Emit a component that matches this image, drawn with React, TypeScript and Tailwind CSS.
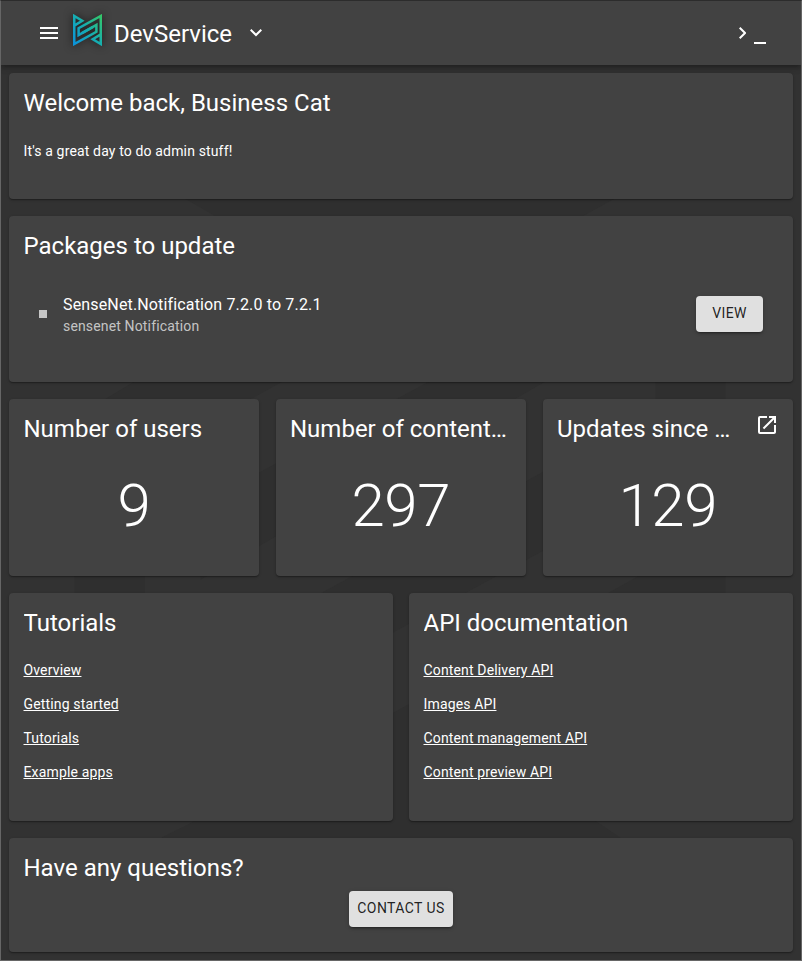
import type { ReactNode } from "react";

function Watermark() {
  return (
    <svg className="absolute inset-0 h-full w-full" viewBox="0 0 802 961" aria-hidden="true">
      <g fill="#2f2f2f">
        <path d="M157 182 314 273 74 417V760L144 700V457L250 399 644 182Z" />
        <path d="M200 504 656 260V318L200 580Z" />
        <path d="M250 632 580 452V531L250 711Z" />
        <path d="M656 290 726 250V640L595 821 620 838 700 900H100L162 838 188 825 401 709 656 567Z" />
      </g>
    </svg>
  );
}

function Logo() {
  return (
    <svg className="ml-[15px] mt-[-6px] h-8 w-[29px] drop-shadow-[0_0_4px_rgba(0,0,0,0.7)]" viewBox="0 0 29 32" fill="none">
      <defs>
        <linearGradient id="brand" x1="0" y1="28" x2="29" y2="3" gradientUnits="userSpaceOnUse">
          <stop offset="0" stopColor="#0c93d8" />
          <stop offset=".5" stopColor="#16aeb0" />
          <stop offset="1" stopColor="#34c66a" />
        </linearGradient>
      </defs>
      <g stroke="url(#brand)" strokeWidth="2.5">
        <path d="M9 19.2 23.4 11V17.8L1.25 30V2L9.2 6.8 1.25 11.6" />
        <path d="M20 12.8 5.6 21V14.2L27.75 2V30L19.8 25.2 27.75 20.4" />
      </g>
    </svg>
  );
}

function Card({ title, className, action, children }: { title: string; className: string; action?: ReactNode; children: ReactNode }) {
  return (
    <section
      className={
        "flex min-w-0 flex-col rounded bg-[#424242] px-[14.5px] pt-[14px] shadow-[0_1px_3px_rgba(0,0,0,0.2),0_1px_1px_rgba(0,0,0,0.14),0_2px_1px_-1px_rgba(0,0,0,0.12)] " +
        className
      }
    >
      <div className="flex items-start justify-between">
        <h2 className="min-w-0 truncate text-2xl leading-8">{title}</h2>
        {action}
      </div>
      {children}
    </section>
  );
}

function Stat({ title, value, action, className = "" }: { title: string; value: number; action?: ReactNode; className?: string }) {
  return (
    <Card title={title} className={"h-[177px] " + className} action={action}>
      <p className="mt-[25px] text-center text-[60px] font-light leading-[72px] tracking-[-0.5px]">{value}</p>
    </Card>
  );
}

function Links({ items }: { items: string[] }) {
  return (
    <ul className="mt-[21px] flex flex-col gap-[14px] text-sm leading-5 tracking-[0.15px]">
      {items.map((item) => (
        <li key={item}>
          <a href="#" className="underline">{item}</a>
        </li>
      ))}
    </ul>
  );
}

const buttonClass =
  "h-9 rounded bg-[#e0e0e0] text-sm leading-[34px] tracking-[0.4px] pb-[2px] text-black/87 shadow-[0_3px_1px_-2px_rgba(0,0,0,0.2),0_2px_2px_rgba(0,0,0,0.14),0_1px_5px_rgba(0,0,0,0.12)] ";

export default function App() {
  return (
    <div className="relative h-[961px] w-[802px] overflow-hidden border border-[#666] border-t-[#2c2c2c] bg-[#323232] font-['Roboto',sans-serif] text-white">
      <Watermark />
      <div className="relative flex flex-col">
        <header className="flex h-16 items-center bg-[#424242] pl-[39px] pr-[35px] shadow-[0_2px_4px_-1px_rgba(0,0,0,0.2),0_4px_5px_rgba(0,0,0,0.14),0_1px_10px_rgba(0,0,0,0.12)]">
          <svg className="h-3 w-[18px]" viewBox="0 0 18 12" fill="#fff">
            <path d="M0 0h18v2H0zM0 5h18v2H0zM0 10h18v2H0z" />
          </svg>
          <Logo />
          <h1 className="ml-[12px] mt-[2px] text-2xl leading-8">DevService</h1>
          <svg className="ml-[18px] h-[7.4px] w-3" viewBox="0 0 12 7.4" fill="#fff">
            <path d="M10.59 0 6 4.58 1.41 0 0 1.41l6 6 6-6z" />
          </svg>
          <div className="ml-auto flex items-center">
            <svg className="h-3 w-[7.4px]" viewBox="0 0 7.4 12" fill="#fff">
              <path d="M0 10.59 4.58 6 0 1.41 1.41 0l6 6-6 6z" />
            </svg>
            <span className="ml-[8px] mt-[20px] h-[2px] w-[12px] bg-white" />
          </div>
        </header>

        <main className="flex flex-col gap-[17px] px-2 pt-2">
          <Card title="Welcome back, Business Cat" className="h-[126px]">
            <p className="mt-[22px] text-sm leading-5 tracking-[0.15px]">It's a great day to do admin stuff!</p>
          </Card>

          <Card title="Packages to update" className="h-[166px]">
            <div className="mt-[30px] flex items-center px-[15.5px]">
              <span className="h-2 w-2 bg-[#c6c6c6]" />
              <div className="ml-[16px] flex-1 pt-px tracking-[0.15px]">
                <p className="text-base leading-6">SenseNet.Notification 7.2.0 to 7.2.1</p>
                <p className="-mt-px text-sm leading-5 text-white/70">sensenet Notification</p>
              </div>
              <button className={buttonClass + "w-[67px]"}>VIEW</button>
            </div>
          </Card>

          <div className="grid grid-cols-3 gap-[17px]">
            <Stat title="Number of users" value={9} />
            <Stat title="Number of content items" value={297} className="pl-[14px]" />
            <Stat
              title="Updates since last week"
              value={129}
              className="pl-[14px]"
              action={
                <svg className="ml-[26px] mr-[1.5px] mt-[2px] h-[20px] w-[20px] shrink-0" viewBox="2 2 20 20" fill="#fff">
                  <path d="M19 19H5V5h7V3H5a2 2 0 0 0-2 2v14a2 2 0 0 0 2 2h14c1.1 0 2-.9 2-2v-7h-2zM14 3v2h3.59l-9.83 9.83 1.41 1.41L19 6.41V10h2V3z" />
                </svg>
              }
            />
          </div>

          <div className="grid grid-cols-2 gap-4">
            <Card title="Tutorials" className="h-[228px]">
              <Links items={["Overview", "Getting started", "Tutorials", "Example apps"]} />
            </Card>
            <Card title="API documentation" className="h-[228px]">
              <Links items={["Content Delivery API", "Images API", "Content management API", "Content preview API"]} />
            </Card>
          </div>

          <Card title="Have any questions?" className="h-[114px]">
            <button className={buttonClass + "mt-[7px] w-[104px] self-center"}>CONTACT US</button>
          </Card>
        </main>
      </div>
    </div>
  );
}
